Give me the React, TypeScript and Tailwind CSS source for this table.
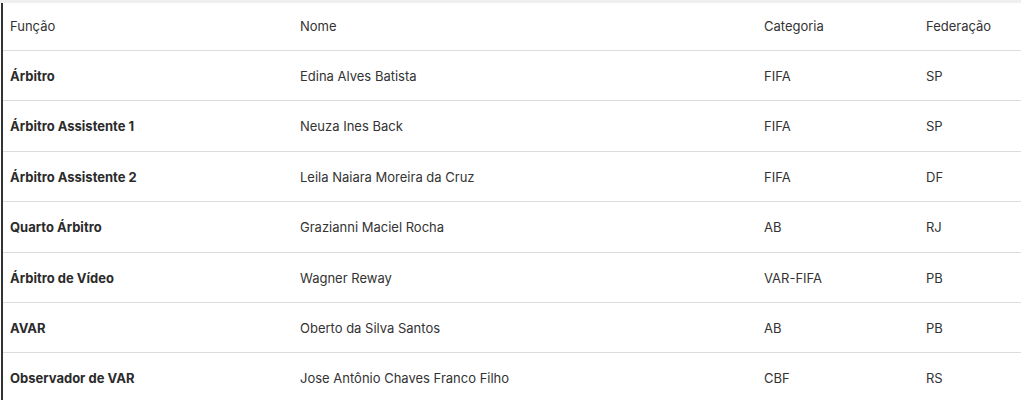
import React from "react";

const rows = [
  ["Árbitro", "Edina Alves Batista", "FIFA", "SP"],
  ["Árbitro Assistente 1", "Neuza Ines Back", "FIFA", "SP"],
  ["Árbitro Assistente 2", "Leila Naiara Moreira da Cruz", "FIFA", "DF"],
  ["Quarto Árbitro", "Grazianni Maciel Rocha", "AB", "RJ"],
  ["Árbitro de Vídeo", "Wagner Reway", "VAR-FIFA", "PB"],
  ["AVAR", "Oberto da Silva Santos", "AB", "PB"],
  ["Observador de VAR", "Jose Antônio Chaves Franco Filho", "CBF", "RS"],
];

export default function App() {
  return (
    <div className="w-[1021px] h-[400px] overflow-hidden bg-white text-[13px] text-[#333] [font-family:Inter,'Noto_Sans',sans-serif]">
      <div className="h-[3px] bg-[#efefef]" />
      <div className="ml-px border-l-2 border-[#333]">
        <div className="flex items-center h-[48px] pt-px border-b border-[#dcdcdc]">
          <div className="w-[287px] pl-[7px]">Função</div>
          <div className="w-[464px] pl-[10px]">Nome</div>
          <div className="w-[162px] pl-[10px]">Categoria</div>
          <div className="flex-1 pl-[10px]">Federação</div>
        </div>
        {rows.map((r, i) => (
          <div key={i} className="flex items-center h-[50.4px] pt-[2px] border-b border-[#dcdcdc]">
            <div className="w-[287px] pl-[7px] font-bold text-[#2b2b2b]">{r[0]}</div>
            <div className="w-[464px] pl-[10px]">{r[1]}</div>
            <div className="w-[162px] pl-[10px]">{r[2]}</div>
            <div className="flex-1 pl-[10px]">{r[3]}</div>
          </div>
        ))}
      </div>
    </div>
  );
}
